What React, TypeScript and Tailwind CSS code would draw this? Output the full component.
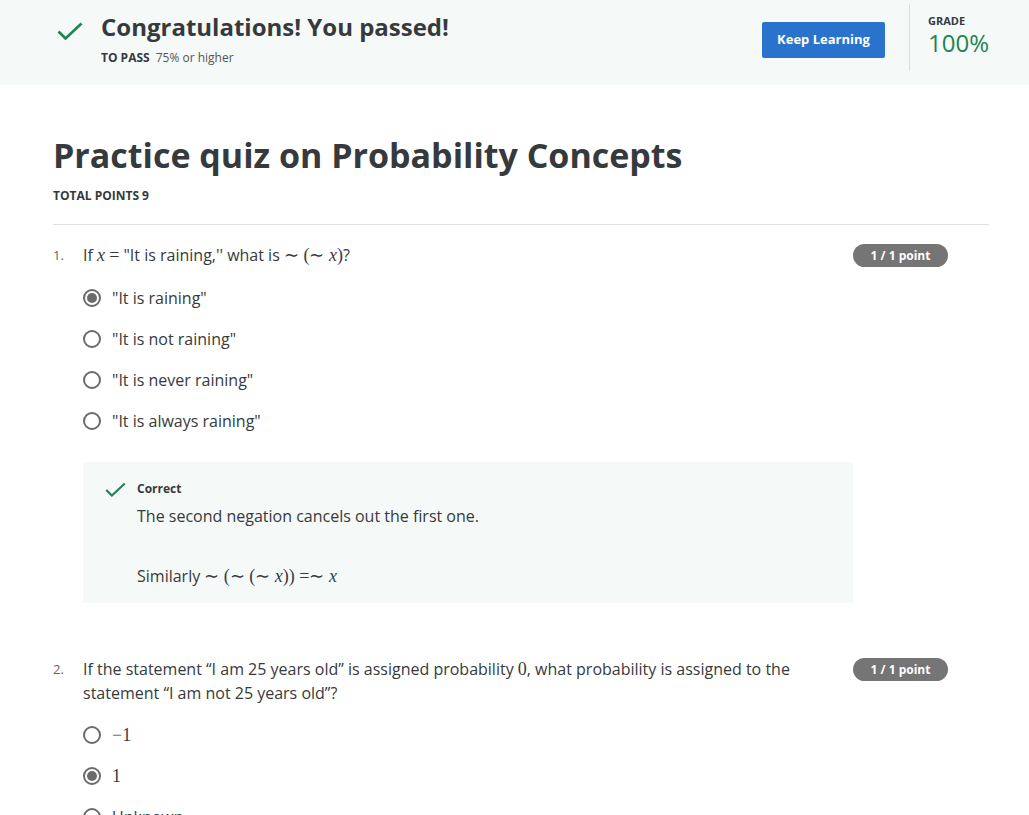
import React from "react";

const sans = { fontFamily: '"Open Sans", "Noto Sans", sans-serif' };

function Check({ className }: { className?: string }) {
  return (
    <svg viewBox="0 0 26 18" fill="none" className={className}>
      <path d="M1.5 9.5 L8.5 16.5 L24.5 1.5" stroke="#1f8354" strokeWidth={2.6} />
    </svg>
  );
}

// styl wzorów jak w KaTeX
function M({ children }: { children: React.ReactNode }) {
  return <span className="font-['Liberation_Serif',serif] text-[18px] leading-none">{children}</span>;
}
function V({ children }: { children: React.ReactNode }) {
  return <span className="font-['Liberation_Serif',serif] italic text-[18px] leading-none">{children}</span>;
}

function Radio({ checked, children }: { checked?: boolean; children: React.ReactNode }) {
  return (
    <div className="flex items-center h-[41px]">
      <span className="w-[18px] h-[18px] rounded-full border-2 border-[#6b6b6b] flex items-center justify-center shrink-0">
        {checked && <span className="w-[10px] h-[10px] rounded-full bg-[#6b6b6b]" />}
      </span>
      <span className="ml-[11px] text-[16px] text-[#373a3c]">{children}</span>
    </div>
  );
}

function Badge() {
  return (
    <div className="w-[95px] h-[23px] rounded-full bg-[#757575] text-white text-[12px] font-bold flex items-center justify-center shrink-0">
      1 / 1 point
    </div>
  );
}

export default function App() {
  return (
    <div className="min-h-screen bg-white text-[#373a3c]" style={sans}>
      {/* pasek z wynikiem */}
      <div className="h-[85px] bg-[#f5f9f8] flex items-start pl-[57px] pr-[40px]">
        <div className="flex items-start pt-[22px]">
          <Check className="w-[26px] h-[18px]" />
          <div className="ml-[18px] -mt-[13px]">
            <div className="text-[24px] font-bold leading-[36px] text-[#373a3c]">Congratulations! You passed!</div>
            <div className="text-[12px] mt-[4px] flex items-baseline">
              <span className="font-bold text-[#373a3c]">TO PASS</span>
              <span className="ml-[6px] text-[#555]">75% or higher</span>
            </div>
          </div>
        </div>
        <div className="ml-auto flex items-start">
          <button className="mt-[22px] w-[123px] h-[36px] rounded-[2px] bg-[#2a73cc] text-white text-[13px] font-bold">
            Keep Learning
          </button>
          <div className="ml-[24px] mt-[4px] w-px h-[67px] bg-[#dcdfdf]" />
          <div className="ml-[18px] pt-[13px]">
            <div className="text-[11px] font-bold text-[#373a3c] leading-[16px]">GRADE</div>
            <div className="text-[24px] text-[#1f8354] leading-[28px]">100%</div>
          </div>
        </div>
      </div>

      <div className="mx-[53px] w-[936px]">
        <h1 className="mt-[47px] text-[34px] font-bold leading-[46px] text-[#373a3c]">
          Practice quiz on Probability Concepts
        </h1>
        <div className="mt-[9px] text-[12px] font-bold text-[#373a3c]">TOTAL POINTS 9</div>
        <div className="mt-[19px] h-px bg-[#e0e0e0]" />

        {/* pytanie 1 */}
        <div className="mt-[18px] flex">
          <div className="w-[30px] text-[13px] text-[#666] leading-[24px]">1.</div>
          <div className="w-[770px]">
            <div className="text-[16px] leading-[24px] pr-[20px]">
              If <V>x</V> <M>=</M> "It is raining,'' what is <M>∼ (∼ </M>
              <V>x</V>
              <M>)</M>?
            </div>
            <div className="mt-[10px]">
              <Radio checked>"It is raining"</Radio>
              <Radio>"It is not raining"</Radio>
              <Radio>"It is never raining"</Radio>
              <Radio>"It is always raining"</Radio>
            </div>
            <div className="mt-[21px] bg-[#f5f9f8] h-[141px] pl-[22px] pt-[19px] flex">
              <Check className="w-[21px] h-[15px] mt-[1px]" />
              <div className="ml-[11px]">
                <div className="text-[12px] font-bold text-[#373a3c] leading-[16px]">Correct</div>
                <div className="text-[16px] text-[#373a3c] leading-[24px] mt-[7px]">
                  The second negation cancels out the first one.
                </div>
                <div className="text-[16px] text-[#373a3c] leading-[24px] mt-[36px]">
                  Similarly <M>∼ (∼ (∼ </M>
                  <V>x</V>
                  <M>)) =∼ </M>
                  <V>x</V>
                </div>
              </div>
            </div>
          </div>
          <div className="pt-[1px]">
            <Badge />
          </div>
        </div>

        {/* pytanie 2 */}
        <div className="mt-[54px] flex">
          <div className="w-[30px] text-[13px] text-[#666] leading-[24px]">2.</div>
          <div className="w-[770px]">
            <div className="text-[16px] leading-[24px] pr-[40px]">
              If the statement “I am 25 years old” is assigned probability <M>0</M>, what probability is assigned to
              the statement “I am not 25 years old”?
            </div>
            <div className="mt-[9px]">
              <Radio>
                <M>
                  <span className="text-[#777]">−</span>1
                </M>
              </Radio>
              <Radio checked>
                <M>1</M>
              </Radio>
              <Radio>Unknown</Radio>
            </div>
          </div>
          <div className="pt-[1px]">
            <Badge />
          </div>
        </div>
      </div>
    </div>
  );
}
